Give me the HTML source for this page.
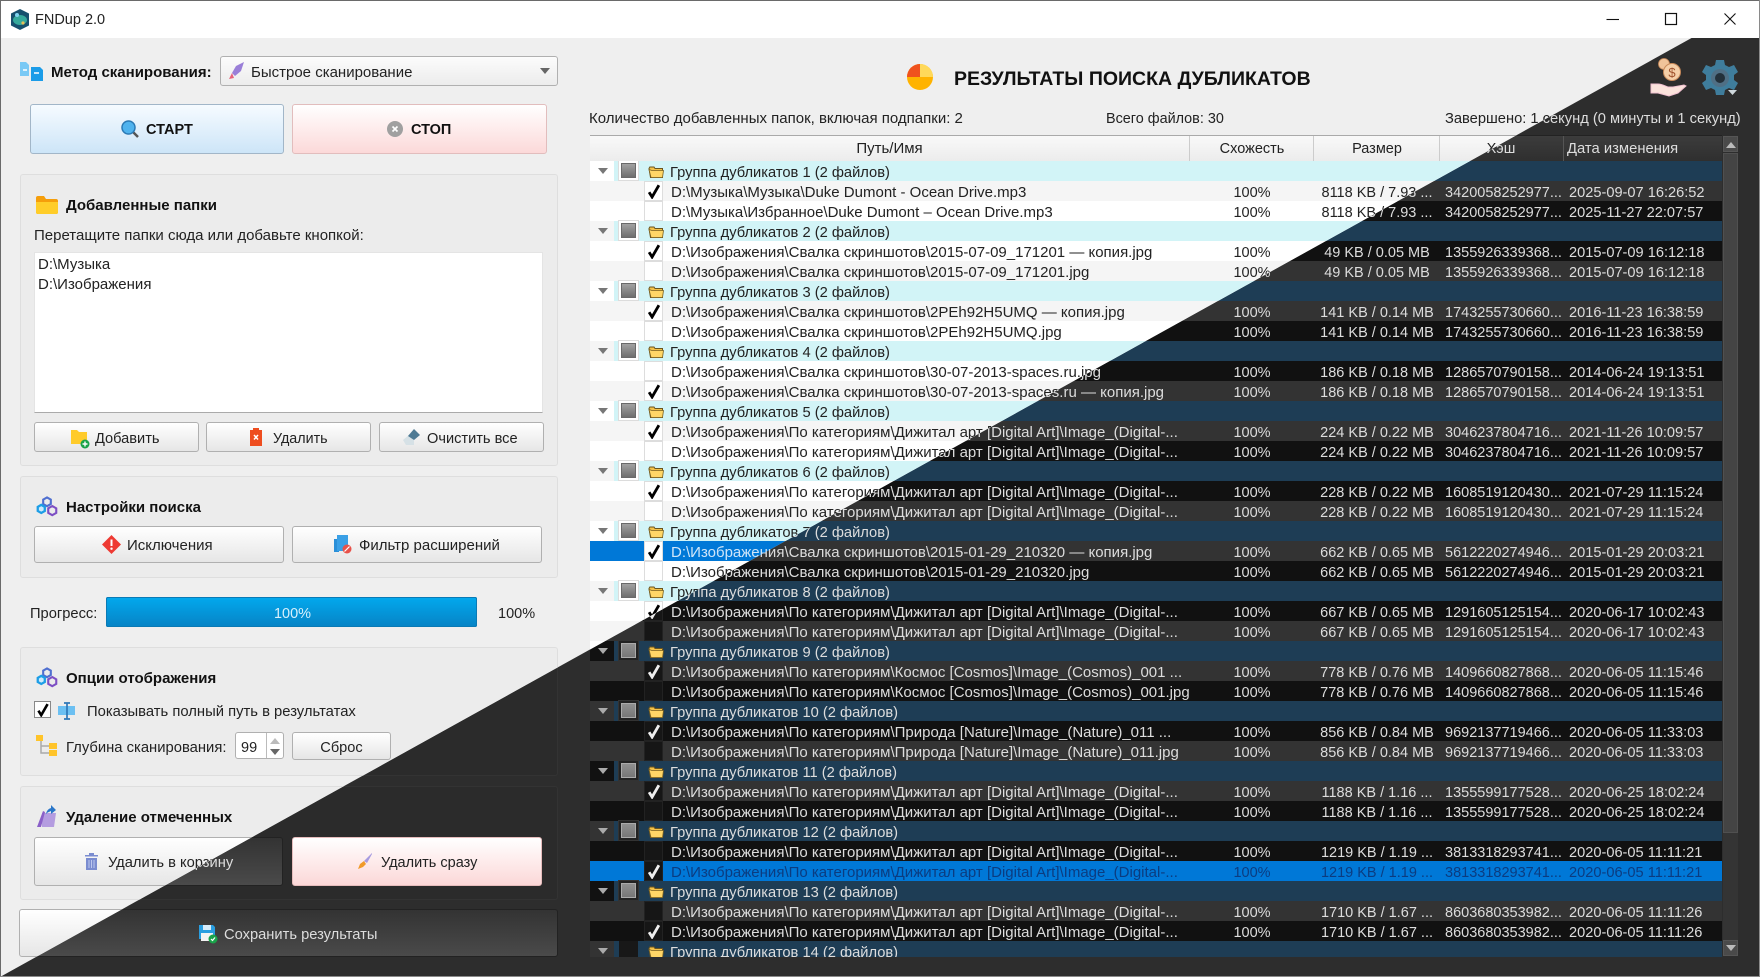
<!DOCTYPE html>
<html lang="ru"><head><meta charset="utf-8"><title>FNDup 2.0</title>
<style>
html,body{margin:0;padding:0;width:1760px;height:977px;overflow:hidden;background:#2d2d2d}
body{position:relative;font-family:"Liberation Sans","Noto Sans CJK SC",sans-serif;font-size:15px;color:#222}
.lay{position:absolute;left:0;top:0;width:1760px;height:977px}
#D{background:#2d2d2d;color:#ddd}
#L{background:#efefef;clip-path:polygon(0 0,1760px 0,0 977px)}
.t{position:absolute;white-space:nowrap;line-height:20px;height:20px}
.h{font-weight:bold;font-size:15px;color:#111}
.i{position:absolute;overflow:visible}
.b{position:absolute;box-sizing:border-box;border:1px solid #b0b0b0;border-radius:3px;background:linear-gradient(#fff,#e6e6e6)}
.box{position:absolute;box-sizing:border-box;border:1px solid #dedede;border-radius:3px;background:#ececec}
#D .box{border-color:#333;background:#2b2b2b}
#D .b{border-color:#222;background:linear-gradient(#333,#4a4a4a)}
#D .b.red,#L .b.red{background:linear-gradient(#fff,#fcd8d8);border-color:#e6bcbc}
#tb{position:absolute;left:0;top:0;width:1760px;height:38px;background:#fff}
.frame{position:absolute;background:#6a6a6a}
.tv{position:absolute;left:590px;top:161px;width:1132px;height:796px;overflow:hidden}
.r{position:relative;height:20px;background:#fff;font-size:15px;white-space:nowrap}
.r:nth-child(even){background:#f5f5f5}
#D .r{background:#111}
#D .r:nth-child(even){background:#333}
.r.g::before{content:"";position:absolute;left:24px;right:0;top:0;bottom:0;background:#d2f4f7}
#D .r.g::before{background:#1e3d55}
.r>*{position:absolute;top:0;line-height:20px;font-style:normal;font-weight:normal;text-decoration:none}
.g em{left:8px;top:7px;width:0;height:0;border:5px solid transparent;border-top:6px solid #777;border-bottom:0}
#D .g em{border-top-color:#aaa}
.g i{left:31px;top:2px;width:13px;height:13px;border:1px solid #6a6a6a;background:linear-gradient(#a2a2a2,#6e6e6e);box-shadow:0 0 0 2px #fff,0 0 0 3px #dcdcdc}
#D .g i{border-color:#aaa;background:linear-gradient(#909090,#777);box-shadow:0 0 0 2px #222,0 0 0 3px #333}
#D .g i.n{background:#181818;border-color:#181818;box-shadow:0 0 0 2px #181818}
.g svg{left:58px;top:5px;width:16px;height:13px}
.g b{left:80px;top:2px;font-size:14.7px}
.r>i.c{left:54px;top:0;width:19px;height:20px;box-sizing:border-box;background:#fff;border:1px solid #ddd}
#D .r>i.c{background:#161616;border-color:#222}
.r>svg.k{left:58px;top:3px;width:12px;height:15px;color:#000}
#D .r>svg.k{color:#eee}
.p{left:81px;top:2px}
.u{left:600px;top:2px;width:124px;text-align:center;font-size:14.5px}
.s{left:724px;top:2px;width:126px;text-align:center;font-size:14.5px}
.x{left:855px;top:2px;font-size:14.5px}
.d{left:979px;top:2px;font-size:14.6px}
.sl{background:#0078d7!important}
#L .sl .p{color:#cfe6fa}
#D .sl>*{color:#0b3c80}
.hd{position:absolute;left:590px;top:135px;width:1132px;height:25px;background:linear-gradient(#f9f9f9,#ececec);border-bottom:1px solid #aaa;border-top:1px solid #aaa;box-sizing:content-box}
#D .hd{background:linear-gradient(#3c3c3c,#2f2f2f);border-color:#222}
.hd span{position:absolute;top:3px;line-height:20px;text-align:center;font-size:14.5px}
.hd u{position:absolute;top:0;width:1px;height:25px;background:#ccc}
#D .hd u{background:#555}
</style></head><body>
<svg width="0" height="0" style="position:absolute"><defs>
<symbol id="fd" viewBox="0 0 16 13"><path d="M1 2.500L1.800 1H6L7 2.500H14.500V11.500H2.500Z" fill="#f3c24a" stroke="#6a5520"/><path d="M1 3.500L3 11.500H14.500L15.500 4.500H4Z" fill="#ffd667" stroke="#7a6020" stroke-width=".8"/></symbol>
<symbol id="ck" viewBox="0 0 12 15"><path d="M1.100 8.200L4.100 13L10.900 1.200" fill="none" stroke="currentColor" stroke-width="2.800"/></symbol>
<symbol id="gr" viewBox="0 0 22 22"><path d="M11 1.500l4 2.300v4.600l-4 2.300-4-2.300V3.800z" fill="none" stroke="#4f6fd0" stroke-width="2.200"/><path d="M5 9.300l3.700 2.100v4.300L5 17.800l-3.700-2.100v-4.300z" fill="#cfeafa" stroke="#1d9ee6" stroke-width="2.400"/><path d="M16.500 10.500l4.200 2.400v4.800l-4.200 2.400-4.200-2.400v-4.800z" fill="none" stroke="#7d4fc4" stroke-width="2.200"/></symbol>
</defs></svg>

<!-- DARK LAYER -->
<div id="D" class="lay">
<div class="box" style="left:20px;top:647px;width:538px;height:129px"></div>
<div class="box" style="left:20px;top:786px;width:538px;height:114px"></div>
<div class="b" style="left:34px;top:837px;width:249px;height:49px"></div>
<span class="t" style="left:108px;top:853px;font-size:14.7px">Удалить в корзину</span>
<div class="b red" style="left:292px;top:837px;width:250px;height:49px"></div>
<svg class="i" style="left:357px;top:852px" width="16" height="18" viewBox="0 0 16 18"><path d="M15 1L7 9l3 2 5-9z" fill="#a79be0"/><path d="M7 9L3 12 1 17l5-2 3-3z" fill="#f09a2a"/></svg>
<span class="t" style="left:381px;top:853px;color:#222;font-size:14.5px">Удалить сразу</span>
<div class="b" style="left:19px;top:909px;width:539px;height:48px"></div>
<svg class="i" style="left:199px;top:925px" width="19" height="19" viewBox="0 0 19 19"><path d="M0 0h14l2 2v12H0z" fill="#2a9ee0"/><rect x="4" y="0" width="8" height="5" fill="#d6ecfa"/><rect x="2" y="8" width="12" height="8" fill="#f3f3f3"/><circle cx="14" cy="14" r="4.500" fill="#1aa34a"/><path d="M12 14l1.500 1.500 2.500-3" stroke="#fff" fill="none" stroke-width="1.200"/></svg>
<span class="t" style="left:224px;top:925px;font-size:14.7px">Сохранить результаты</span>
<span class="t" style="left:1445px;top:109px;font-size:14.7px">Завершено: 1 секунд (0 минуты и 1 секунд)</span>
<div class="hd"><u style="left:599px"></u><u style="left:723px"></u><u style="left:849px"></u><u style="left:973px"></u><span style="left:849px;width:124px">Хэш</span><span style="left:977px;font-size:14.8px">Дата изменения</span></div>
<div style="position:absolute;left:1723px;top:136px;width:15px;height:16px;background:#4a4a4a;border:1px solid #555;box-sizing:border-box"></div>
<div style="position:absolute;left:1726px;top:142px;border:5px solid transparent;border-bottom:6px solid #bbb;border-top:0"></div>
<div style="position:absolute;left:1723px;top:153px;width:15px;height:680px;background:#444;border:1px solid #505050;box-sizing:border-box"></div>
<div style="position:absolute;left:1723px;top:833px;width:15px;height:107px;background:#343434"></div>
<div style="position:absolute;left:1723px;top:940px;width:15px;height:16px;background:#4a4a4a;border:1px solid #555;box-sizing:border-box"></div>
<div style="position:absolute;left:1726px;top:945px;border:5px solid transparent;border-top:6px solid #bbb;border-bottom:0"></div>
<div class="tv">
<div class="r g"><em></em><i></i><svg><use href="#fd"/></svg><b>Группа дубликатов 1 (2 файлов)</b></div>
<div class="r"><i class="c"></i><svg class="k"><use href="#ck"/></svg><span class="p">D:\Музыка\Музыка\Duke Dumont - Ocean Drive.mp3</span><span class="u">100%</span><span class="s">8118 KB / 7.93 ...</span><span class="x">3420058252977...</span><span class="d">2025-09-07 16:26:52</span></div>
<div class="r"><i class="c"></i><span class="p">D:\Музыка\Избранное\Duke Dumont – Ocean Drive.mp3</span><span class="u">100%</span><span class="s">8118 KB / 7.93 ...</span><span class="x">3420058252977...</span><span class="d">2025-11-27 22:07:57</span></div>
<div class="r g"><em></em><i></i><svg><use href="#fd"/></svg><b>Группа дубликатов 2 (2 файлов)</b></div>
<div class="r"><i class="c"></i><svg class="k"><use href="#ck"/></svg><span class="p">D:\Изображения\Свалка скриншотов\2015-07-09_171201 — копия.jpg</span><span class="u">100%</span><span class="s">49 KB / 0.05 MB</span><span class="x">1355926339368...</span><span class="d">2015-07-09 16:12:18</span></div>
<div class="r"><i class="c"></i><span class="p">D:\Изображения\Свалка скриншотов\2015-07-09_171201.jpg</span><span class="u">100%</span><span class="s">49 KB / 0.05 MB</span><span class="x">1355926339368...</span><span class="d">2015-07-09 16:12:18</span></div>
<div class="r g"><em></em><i></i><svg><use href="#fd"/></svg><b>Группа дубликатов 3 (2 файлов)</b></div>
<div class="r"><i class="c"></i><svg class="k"><use href="#ck"/></svg><span class="p">D:\Изображения\Свалка скриншотов\2PEh92H5UMQ — копия.jpg</span><span class="u">100%</span><span class="s">141 KB / 0.14 MB</span><span class="x">1743255730660...</span><span class="d">2016-11-23 16:38:59</span></div>
<div class="r"><i class="c"></i><span class="p">D:\Изображения\Свалка скриншотов\2PEh92H5UMQ.jpg</span><span class="u">100%</span><span class="s">141 KB / 0.14 MB</span><span class="x">1743255730660...</span><span class="d">2016-11-23 16:38:59</span></div>
<div class="r g"><em></em><i></i><svg><use href="#fd"/></svg><b>Группа дубликатов 4 (2 файлов)</b></div>
<div class="r"><i class="c"></i><span class="p">D:\Изображения\Свалка скриншотов\30-07-2013-spaces.ru.jpg</span><span class="u">100%</span><span class="s">186 KB / 0.18 MB</span><span class="x">1286570790158...</span><span class="d">2014-06-24 19:13:51</span></div>
<div class="r"><i class="c"></i><svg class="k"><use href="#ck"/></svg><span class="p">D:\Изображения\Свалка скриншотов\30-07-2013-spaces.ru — копия.jpg</span><span class="u">100%</span><span class="s">186 KB / 0.18 MB</span><span class="x">1286570790158...</span><span class="d">2014-06-24 19:13:51</span></div>
<div class="r g"><em></em><i></i><svg><use href="#fd"/></svg><b>Группа дубликатов 5 (2 файлов)</b></div>
<div class="r"><i class="c"></i><svg class="k"><use href="#ck"/></svg><span class="p">D:\Изображения\По категориям\Дижитал арт [Digital Art]\Image_(Digital-...</span><span class="u">100%</span><span class="s">224 KB / 0.22 MB</span><span class="x">3046237804716...</span><span class="d">2021-11-26 10:09:57</span></div>
<div class="r"><i class="c"></i><span class="p">D:\Изображения\По категориям\Дижитал арт [Digital Art]\Image_(Digital-...</span><span class="u">100%</span><span class="s">224 KB / 0.22 MB</span><span class="x">3046237804716...</span><span class="d">2021-11-26 10:09:57</span></div>
<div class="r g"><em></em><i></i><svg><use href="#fd"/></svg><b>Группа дубликатов 6 (2 файлов)</b></div>
<div class="r"><i class="c"></i><svg class="k"><use href="#ck"/></svg><span class="p">D:\Изображения\По категориям\Дижитал арт [Digital Art]\Image_(Digital-...</span><span class="u">100%</span><span class="s">228 KB / 0.22 MB</span><span class="x">1608519120430...</span><span class="d">2021-07-29 11:15:24</span></div>
<div class="r"><i class="c"></i><span class="p">D:\Изображения\По категориям\Дижитал арт [Digital Art]\Image_(Digital-...</span><span class="u">100%</span><span class="s">228 KB / 0.22 MB</span><span class="x">1608519120430...</span><span class="d">2021-07-29 11:15:24</span></div>
<div class="r g"><em></em><i></i><svg><use href="#fd"/></svg><b>Группа дубликатов 7 (2 файлов)</b></div>
<div class="r"><i class="c"></i><svg class="k"><use href="#ck"/></svg><span class="p">D:\Изображения\Свалка скриншотов\2015-01-29_210320 — копия.jpg</span><span class="u">100%</span><span class="s">662 KB / 0.65 MB</span><span class="x">5612220274946...</span><span class="d">2015-01-29 20:03:21</span></div>
<div class="r"><i class="c"></i><span class="p">D:\Изображения\Свалка скриншотов\2015-01-29_210320.jpg</span><span class="u">100%</span><span class="s">662 KB / 0.65 MB</span><span class="x">5612220274946...</span><span class="d">2015-01-29 20:03:21</span></div>
<div class="r g"><em></em><i></i><svg><use href="#fd"/></svg><b>Группа дубликатов 8 (2 файлов)</b></div>
<div class="r"><i class="c"></i><svg class="k"><use href="#ck"/></svg><span class="p">D:\Изображения\По категориям\Дижитал арт [Digital Art]\Image_(Digital-...</span><span class="u">100%</span><span class="s">667 KB / 0.65 MB</span><span class="x">1291605125154...</span><span class="d">2020-06-17 10:02:43</span></div>
<div class="r"><i class="c"></i><span class="p">D:\Изображения\По категориям\Дижитал арт [Digital Art]\Image_(Digital-...</span><span class="u">100%</span><span class="s">667 KB / 0.65 MB</span><span class="x">1291605125154...</span><span class="d">2020-06-17 10:02:43</span></div>
<div class="r g"><em></em><i></i><svg><use href="#fd"/></svg><b>Группа дубликатов 9 (2 файлов)</b></div>
<div class="r"><i class="c"></i><svg class="k"><use href="#ck"/></svg><span class="p">D:\Изображения\По категориям\Космос [Cosmos]\Image_(Cosmos)_001 ...</span><span class="u">100%</span><span class="s">778 KB / 0.76 MB</span><span class="x">1409660827868...</span><span class="d">2020-06-05 11:15:46</span></div>
<div class="r"><i class="c"></i><span class="p">D:\Изображения\По категориям\Космос [Cosmos]\Image_(Cosmos)_001.jpg</span><span class="u">100%</span><span class="s">778 KB / 0.76 MB</span><span class="x">1409660827868...</span><span class="d">2020-06-05 11:15:46</span></div>
<div class="r g"><em></em><i></i><svg><use href="#fd"/></svg><b>Группа дубликатов 10 (2 файлов)</b></div>
<div class="r"><i class="c"></i><svg class="k"><use href="#ck"/></svg><span class="p">D:\Изображения\По категориям\Природа [Nature]\Image_(Nature)_011 ...</span><span class="u">100%</span><span class="s">856 KB / 0.84 MB</span><span class="x">9692137719466...</span><span class="d">2020-06-05 11:33:03</span></div>
<div class="r"><i class="c"></i><span class="p">D:\Изображения\По категориям\Природа [Nature]\Image_(Nature)_011.jpg</span><span class="u">100%</span><span class="s">856 KB / 0.84 MB</span><span class="x">9692137719466...</span><span class="d">2020-06-05 11:33:03</span></div>
<div class="r g"><em></em><i></i><svg><use href="#fd"/></svg><b>Группа дубликатов 11 (2 файлов)</b></div>
<div class="r"><i class="c"></i><svg class="k"><use href="#ck"/></svg><span class="p">D:\Изображения\По категориям\Дижитал арт [Digital Art]\Image_(Digital-...</span><span class="u">100%</span><span class="s">1188 KB / 1.16 ...</span><span class="x">1355599177528...</span><span class="d">2020-06-25 18:02:24</span></div>
<div class="r"><i class="c"></i><span class="p">D:\Изображения\По категориям\Дижитал арт [Digital Art]\Image_(Digital-...</span><span class="u">100%</span><span class="s">1188 KB / 1.16 ...</span><span class="x">1355599177528...</span><span class="d">2020-06-25 18:02:24</span></div>
<div class="r g"><em></em><i></i><svg><use href="#fd"/></svg><b>Группа дубликатов 12 (2 файлов)</b></div>
<div class="r"><i class="c"></i><span class="p">D:\Изображения\По категориям\Дижитал арт [Digital Art]\Image_(Digital-...</span><span class="u">100%</span><span class="s">1219 KB / 1.19 ...</span><span class="x">3813318293741...</span><span class="d">2020-06-05 11:11:21</span></div>
<div class="r sl"><i class="c"></i><svg class="k"><use href="#ck"/></svg><span class="p">D:\Изображения\По категориям\Дижитал арт [Digital Art]\Image_(Digital-...</span><span class="u">100%</span><span class="s">1219 KB / 1.19 ...</span><span class="x">3813318293741...</span><span class="d">2020-06-05 11:11:21</span></div>
<div class="r g"><em></em><i></i><svg><use href="#fd"/></svg><b>Группа дубликатов 13 (2 файлов)</b></div>
<div class="r"><i class="c"></i><span class="p">D:\Изображения\По категориям\Дижитал арт [Digital Art]\Image_(Digital-...</span><span class="u">100%</span><span class="s">1710 KB / 1.67 ...</span><span class="x">8603680353982...</span><span class="d">2020-06-05 11:11:26</span></div>
<div class="r"><i class="c"></i><svg class="k"><use href="#ck"/></svg><span class="p">D:\Изображения\По категориям\Дижитал арт [Digital Art]\Image_(Digital-...</span><span class="u">100%</span><span class="s">1710 KB / 1.67 ...</span><span class="x">8603680353982...</span><span class="d">2020-06-05 11:11:26</span></div>
<div class="r g"><em></em><i class="n"></i><svg><use href="#fd"/></svg><b>Группа дубликатов 14 (2 файлов)</b></div>
</div>
</div>

<!-- LIGHT LAYER -->
<div id="L" class="lay">
<svg class="i" style="left:20px;top:61px" width="23" height="20" viewBox="0 0 23 20"><path d="M0 1h6l3 3v11H0z" fill="#79c9f5"/><path d="M11 6h9l3 3v11H11z" fill="#1b9ce8"/><path d="M3 9h4M14 12h5" stroke="#fff" stroke-width="1.600"/></svg>
<span class="t h" style="left:51px;top:63px">Метод сканирования:</span>
<div class="b" style="left:220px;top:56px;width:338px;height:30px;background:linear-gradient(#fcfcfc,#ececec)"></div>
<svg class="i" style="left:229px;top:62px" width="16" height="18" viewBox="0 0 16 18"><path d="M15 0L7 4 3 11l3 3 6-5z" fill="#9a7fd8"/><path d="M3 11l-3 6 5-1z" fill="#e8637a"/></svg>
<span class="t" style="left:251px;top:63px">Быстрое сканирование</span>
<div style="position:absolute;left:540px;top:68px;border:5px solid transparent;border-top:6px solid #666;border-bottom:0"></div>

<div class="b" style="left:30px;top:104px;width:254px;height:50px;background:linear-gradient(#f6fbff,#cde5f8);border-color:#a2b6c8"></div>
<svg class="i" style="left:121px;top:120px" width="18" height="18" viewBox="0 0 18 18"><path d="M11 11l6 6" stroke="#555" stroke-width="2.500"/><circle cx="7.500" cy="7.500" r="6.500" fill="#4fb3ee" stroke="#2b7ab5" stroke-width="1.500"/></svg>
<span class="t" style="left:146px;top:120px;font-weight:bold;font-size:14.5px;color:#111">СТАРТ</span>
<div class="b" style="left:292px;top:104px;width:255px;height:50px;background:linear-gradient(#fff,#fcd9d9);border-color:#e2bdbd"></div>
<svg class="i" style="left:387px;top:121px" width="16" height="16" viewBox="0 0 16 16"><circle cx="8" cy="8" r="8" fill="#a0a0a0"/><path d="M5.500 5.500l5 5M10.500 5.500l-5 5" stroke="#fff" stroke-width="1.700"/></svg>
<span class="t" style="left:411px;top:120px;font-weight:bold;font-size:14.5px;color:#111">СТОП</span>

<div class="box" style="left:20px;top:174px;width:538px;height:292px"></div>
<svg class="i" style="left:36px;top:196px" width="22" height="18" viewBox="0 0 22 18"><path d="M0 2q0-2 2-2h6l2 3h10q2 0 2 2v11q0 2-2 2H2q-2 0-2-2z" fill="#f59e0b"/><path d="M0 6h22v10q0 2-2 2H2q-2 0-2-2z" fill="#ffcd29"/></svg>
<span class="t h" style="left:66px;top:196px">Добавленные папки</span>
<span class="t" style="left:34px;top:226px">Перетащите папки сюда или добавьте кнопкой:</span>
<div style="position:absolute;left:34px;top:252px;width:509px;height:161px;background:#fff;border:1px solid #e4e4e4;border-bottom-color:#aaa;box-sizing:border-box"></div>
<span class="t" style="left:38px;top:255px">D:\Музыка</span>
<span class="t" style="left:38px;top:275px">D:\Изображения</span>

<div class="b" style="left:34px;top:422px;width:165px;height:30px"></div>
<svg class="i" style="left:71px;top:430px" width="19" height="19" viewBox="0 0 19 19"><path d="M0 0h6l2 2h8v12H0z" fill="#ffcb2b"/><circle cx="14" cy="14" r="4.500" fill="#1aa34a"/><path d="M14 11.500v5M11.500 14h5" stroke="#fff" stroke-width="1.400"/></svg>
<span class="t" style="left:95px;top:429px;font-size:14.6px">Добавить</span>
<div class="b" style="left:206px;top:422px;width:165px;height:30px"></div>
<svg class="i" style="left:250px;top:428px" width="12" height="18" viewBox="0 0 12 18"><path d="M3 0h6v2h3v16H0V2h3z" fill="#ee4d1f"/><path d="M4 7l4 4.500M8 7l-4 4.500" stroke="#fff" stroke-width="1.500"/></svg>
<span class="t" style="left:273px;top:429px;font-size:14.3px">Удалить</span>
<div class="b" style="left:379px;top:422px;width:165px;height:30px"></div>
<svg class="i" style="left:403px;top:429px" width="17" height="17" viewBox="0 0 17 17"><path d="M0 11l6-5 5 5v5H3z" fill="#d6e1e6"/><path d="M5 7l6-7 6 6-6 5z" fill="#4e7a94"/></svg>
<span class="t" style="left:427px;top:429px;font-size:14.6px">Очистить все</span>

<div class="box" style="left:20px;top:476px;width:538px;height:102px"></div>
<svg class="i" style="left:36px;top:496px" width="22" height="21"><use href="#gr"/></svg>
<span class="t h" style="left:66px;top:498px">Настройки поиска</span>
<div class="b" style="left:34px;top:526px;width:250px;height:37px"></div>
<svg class="i" style="left:102px;top:535px" width="19" height="19" viewBox="0 0 19 19"><path d="M9.500 0L19 9.500 9.500 19 0 9.500z" fill="#ee3a33"/><path d="M9.500 4.500v6.500" stroke="#fff" stroke-width="2"/><circle cx="9.500" cy="13.700" r="1.200" fill="#fff"/></svg>
<span class="t" style="left:127px;top:536px">Исключения</span>
<div class="b" style="left:292px;top:526px;width:250px;height:37px"></div>
<svg class="i" style="left:334px;top:535px" width="18" height="19" viewBox="0 0 18 19"><rect x="0" y="4" width="5" height="13" fill="#2a8fd8"/><rect x="3" y="0" width="11" height="16" fill="#3aa0e6"/><circle cx="13" cy="14" r="4.500" fill="#e8524a"/><path d="M10.500 16.500l5-5" stroke="#fff" stroke-width="1.200"/></svg>
<span class="t" style="left:359px;top:536px">Фильтр расширений</span>

<span class="t" style="left:30px;top:604px;font-size:14.7px">Прогресс:</span>
<div style="position:absolute;left:106px;top:597px;width:371px;height:30px;background:linear-gradient(#02a9ee,#0783c5);border-radius:2px;box-shadow:inset 0 0 0 1px #0a7ab5"></div>
<span class="t" style="left:107px;top:604px;width:371px;text-align:center;color:#d8f0fc;font-size:14.5px">100%</span>
<span class="t" style="left:498px;top:604px;font-size:14.5px">100%</span>

<div class="box" style="left:20px;top:647px;width:538px;height:129px"></div>
<svg class="i" style="left:36px;top:667px" width="22" height="21"><use href="#gr"/></svg>
<span class="t h" style="left:66px;top:669px">Опции отображения</span>
<div style="position:absolute;left:34px;top:701px;width:17px;height:17px;box-sizing:border-box;background:#fff;border:1px solid #888"></div>
<svg class="i" style="left:37px;top:703px;color:#000" width="12" height="14"><use href="#ck"/></svg>
<svg class="i" style="left:58px;top:702px" width="18" height="18" viewBox="0 0 18 18"><rect x="0" y="4" width="17" height="9" fill="#6cc0f2"/><path d="M9 1v16M6 1h6M6 17h6" stroke="#2f78b8" stroke-width="1.700" fill="none"/></svg>
<span class="t" style="left:87px;top:702px;font-size:14.8px">Показывать полный путь в результатах</span>
<svg class="i" style="left:36px;top:735px" width="22" height="22" viewBox="0 0 22 22"><path d="M5 5v13h8M5 11h8" stroke="#aaa" stroke-width="1.500" fill="none"/><rect x="0" y="0" width="7" height="6" fill="#ffc42a"/><rect x="13" y="8" width="8" height="6" fill="#ffc42a"/><rect x="13" y="15" width="8" height="6" fill="#ffc42a"/></svg>
<span class="t" style="left:66px;top:738px;font-size:14.8px">Глубина сканирования:</span>
<div class="b" style="left:235px;top:732px;width:49px;height:27px;background:#fff"></div>
<div style="position:absolute;left:266px;top:733px;width:1px;height:25px;background:#bbb"></div>
<div style="position:absolute;left:270px;top:738px;border:5px solid transparent;border-bottom:6px solid #bbb;border-top:0"></div>
<div style="position:absolute;left:270px;top:749px;border:5px solid transparent;border-top:6px solid #666;border-bottom:0"></div>
<span class="t" style="left:241px;top:738px;font-size:14.5px">99</span>
<div class="b" style="left:292px;top:732px;width:99px;height:28px"></div>
<span class="t" style="left:292px;top:738px;width:99px;text-align:center;font-size:14.6px">Сброс</span>

<div class="box" style="left:20px;top:786px;width:538px;height:114px"></div>
<svg class="i" style="left:37px;top:805px" width="20" height="22" viewBox="0 0 20 22"><path d="M5 8h14l-2 14H5z" fill="#b49ce0"/><path d="M0 22L6 6l2 1-4 15z" fill="#8a5fc8"/><path d="M9 9q1-5 5-6V0l5 5-5 4V6q-3 1-5 3z" fill="#2a76c8"/></svg>
<span class="t h" style="left:66px;top:808px">Удаление отмеченных</span>
<div class="b" style="left:34px;top:837px;width:249px;height:49px"></div>
<svg class="i" style="left:85px;top:853px" width="13" height="17" viewBox="0 0 13 17"><path d="M4 0h5v2h4v1.500H0V2h4z" fill="#7a8cd0"/><path d="M1 5h11v12H1z" fill="#7a8cd0"/><path d="M4 7v8M6.500 7v8M9 7v8" stroke="#bcc7ee"/></svg>
<span class="t" style="left:108px;top:853px;font-size:14.7px">Удалить в корзину</span>
<div class="b" style="left:19px;top:909px;width:539px;height:48px"></div>
<span class="t" style="left:224px;top:925px;font-size:14.7px">Сохранить результаты</span>

<svg class="i" style="left:907px;top:64px" width="26" height="26" viewBox="0 0 26 26"><circle cx="13" cy="13" r="13" fill="#ffb300"/><path d="M13 13V0A13 13 0 0 1 26 13z" fill="#ffd95a"/><path d="M13 13V0A13 13 0 0 0 0 13z" fill="#f0521e"/></svg>
<span class="t" style="left:954px;top:69px;font-weight:bold;font-size:19.500px;color:#111">РЕЗУЛЬТАТЫ ПОИСКА ДУБЛИКАТОВ</span>
<span class="t" style="left:589px;top:109px">Количество добавленных папок, включая подпапки: 2</span>
<span class="t" style="left:1106px;top:109px;font-size:14.4px">Всего файлов: 30</span>
<span class="t" style="left:1445px;top:109px;font-size:14.7px">Завершено: 1 секунд (0 минуты и 1 секунд)</span>
<div class="hd"><u style="left:599px"></u><u style="left:723px"></u><u style="left:849px"></u><span style="left:0;width:599px;font-size:15px">Путь/Имя</span><span style="left:600px;width:124px">Схожесть</span><span style="left:724px;width:126px">Размер</span><span style="left:849px;width:124px">Хэш</span></div>
<div class="tv">
<div class="r g"><em></em><i></i><svg><use href="#fd"/></svg><b>Группа дубликатов 1 (2 файлов)</b></div>
<div class="r"><i class="c"></i><svg class="k"><use href="#ck"/></svg><span class="p">D:\Музыка\Музыка\Duke Dumont - Ocean Drive.mp3</span><span class="u">100%</span><span class="s">8118 KB / 7.93 ...</span></div>
<div class="r"><i class="c"></i><span class="p">D:\Музыка\Избранное\Duke Dumont – Ocean Drive.mp3</span><span class="u">100%</span><span class="s">8118 KB / 7.93 ...</span></div>
<div class="r g"><em></em><i></i><svg><use href="#fd"/></svg><b>Группа дубликатов 2 (2 файлов)</b></div>
<div class="r"><i class="c"></i><svg class="k"><use href="#ck"/></svg><span class="p">D:\Изображения\Свалка скриншотов\2015-07-09_171201 — копия.jpg</span><span class="u">100%</span></div>
<div class="r"><i class="c"></i><span class="p">D:\Изображения\Свалка скриншотов\2015-07-09_171201.jpg</span><span class="u">100%</span></div>
<div class="r g"><em></em><i></i><svg><use href="#fd"/></svg><b>Группа дубликатов 3 (2 файлов)</b></div>
<div class="r"><i class="c"></i><svg class="k"><use href="#ck"/></svg><span class="p">D:\Изображения\Свалка скриншотов\2PEh92H5UMQ — копия.jpg</span></div>
<div class="r"><i class="c"></i><span class="p">D:\Изображения\Свалка скриншотов\2PEh92H5UMQ.jpg</span></div>
<div class="r g"><em></em><i></i><svg><use href="#fd"/></svg><b>Группа дубликатов 4 (2 файлов)</b></div>
<div class="r"><i class="c"></i><span class="p">D:\Изображения\Свалка скриншотов\30-07-2013-spaces.ru.jpg</span></div>
<div class="r"><i class="c"></i><svg class="k"><use href="#ck"/></svg><span class="p">D:\Изображения\Свалка скриншотов\30-07-2013-spaces.ru — копия.jpg</span></div>
<div class="r g"><em></em><i></i><svg><use href="#fd"/></svg><b>Группа дубликатов 5 (2 файлов)</b></div>
<div class="r"><i class="c"></i><svg class="k"><use href="#ck"/></svg><span class="p">D:\Изображения\По категориям\Дижитал арт [Digital Art]\Image_(Digital-...</span></div>
<div class="r"><i class="c"></i><span class="p">D:\Изображения\По категориям\Дижитал арт [Digital Art]\Image_(Digital-...</span></div>
<div class="r g"><em></em><i></i><svg><use href="#fd"/></svg><b>Группа дубликатов 6 (2 файлов)</b></div>
<div class="r"><i class="c"></i><svg class="k"><use href="#ck"/></svg><span class="p">D:\Изображения\По категориям\Дижитал арт [Digital Art]\Image_(Digital-...</span></div>
<div class="r"><i class="c"></i><span class="p">D:\Изображения\По категориям\Дижитал арт [Digital Art]\Image_(Digital-...</span></div>
<div class="r g"><em></em><i></i><svg><use href="#fd"/></svg><b>Группа дубликатов 7 (2 файлов)</b></div>
<div class="r sl"><i class="c"></i><svg class="k"><use href="#ck"/></svg><span class="p">D:\Изображения\Свалка скриншотов\2015-01-29_210320 — копия.jpg</span></div>
<div class="r"><i class="c"></i><span class="p">D:\Изображения\Свалка скриншотов\2015-01-29_210320.jpg</span></div>
<div class="r g"><em></em><i></i><svg><use href="#fd"/></svg><b>Группа дубликатов 8 (2 файлов)</b></div>
<div class="r"><i class="c"></i><svg class="k"><use href="#ck"/></svg><span class="p">D:\Изображения\По категориям\Дижитал арт [Digital Art]\Image_(Digital-...</span></div>
<div class="r"><i class="c"></i></div>
<div class="r g"><em></em><i></i></div>
</div>
</div>

<!-- money + settings icons -->
<svg class="i" style="left:1650px;top:58px" width="37" height="40" viewBox="0 0 37 40"><circle cx="14" cy="6" r="5.500" fill="#f0c49a" stroke="#c98a5a" stroke-width=".8"/><circle cx="22" cy="14" r="8.500" fill="#f5cfa8" stroke="#c98a5a"/><text x="22" y="19" font-size="13" text-anchor="middle" fill="#a0522d" font-family="Liberation Sans">$</text><path d="M1 26h7c4 0 7 2 10 3h5l11-2 2 1-8 7-9 3-11-3H1z" fill="#fbe3dc" stroke="#f0c0d0"/></svg>
<svg class="i" style="left:1702px;top:59px" width="37" height="38" viewBox="0 0 37 38"><path d="M14 1h8l1 5 4 2 5-2 4 7-4 3v5l4 3-4 7-5-2-4 2-1 5h-8l-1-5-4-2-5 2-4-7 4-3v-5l-4-3 4-7 5 2 4-2z" fill="#3f7d9c"/><circle cx="18" cy="19" r="9" fill="#4f6f85"/><circle cx="18" cy="19" r="5" fill="#23303a"/><path d="M26 31h9l-4.500 5z" fill="#cfd8dc"/></svg>

<!-- title bar -->
<div id="tb"></div>
<svg class="i" style="left:10px;top:9px" width="20" height="21" viewBox="0 0 20 21"><path d="M10 0l9 4.500v12L10 21l-9-4.500v-12z" fill="#16506e"/><ellipse cx="10" cy="11" rx="7" ry="5" fill="#35a99c"/><circle cx="7" cy="6" r="2" fill="#7fd4f0"/><circle cx="13" cy="14" r="1.600" fill="#e8c15a"/></svg>
<span class="t" style="left:35px;top:10px;font-size:14.5px;color:#222">FNDup 2.0</span>
<svg class="i" style="left:1605px;top:11px" width="140" height="16" viewBox="0 0 140 16"><path d="M1.500 8.500H14" stroke="#111" stroke-width="1.100"/><rect x="60.500" y="2.500" width="11" height="11" fill="none" stroke="#111" stroke-width="1.200"/><path d="M119.500 2.500l11 11M130.500 2.500l-11 11" stroke="#111" stroke-width="1.100"/></svg>
<div class="frame" style="left:0;top:0;width:1760px;height:1px"></div>
<div class="frame" style="left:0;top:0;width:1px;height:977px"></div>
<div class="frame" style="left:1759px;top:0;width:1px;height:977px;background:#8a8a8a"></div>
<div class="frame" style="left:0;top:976px;width:1760px;height:1px;background:#8a8a8a"></div>
</body></html>
